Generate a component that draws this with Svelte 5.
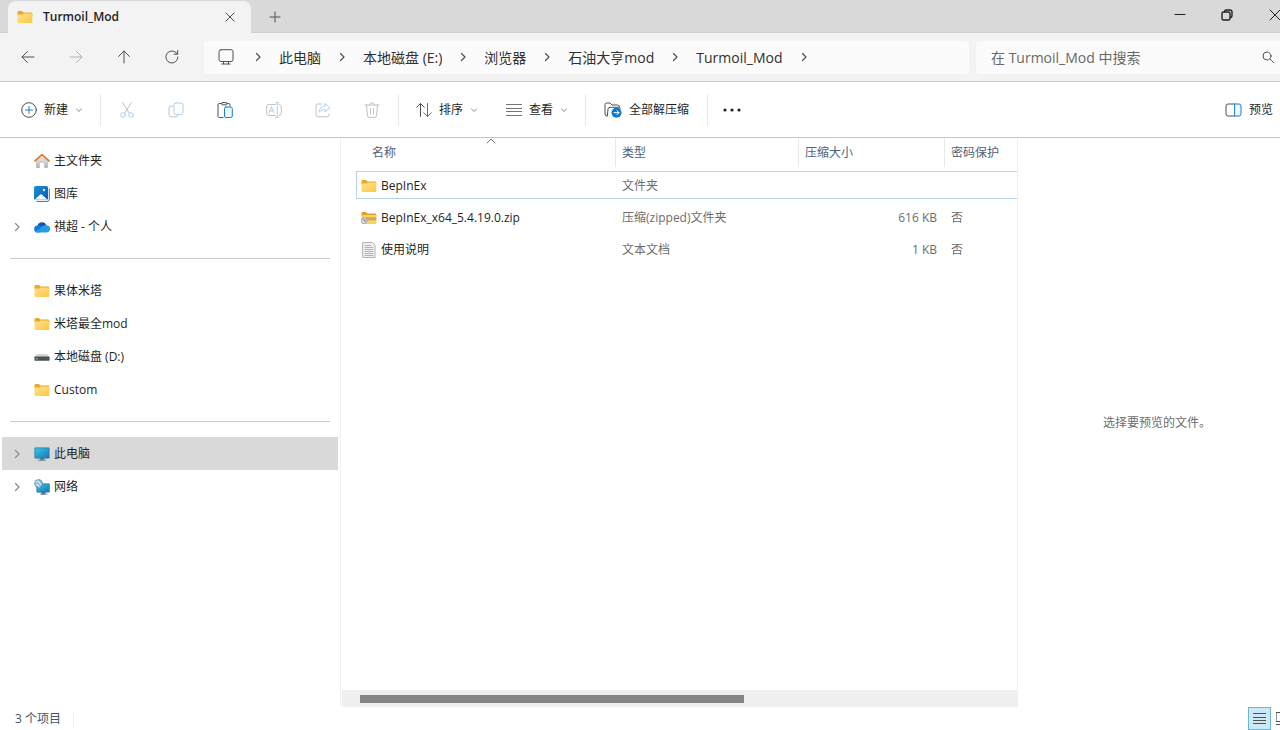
<script>
	const crumbs = ['此电脑', '本地磁盘 (E:)', '浏览器', '石油大亨mod', 'Turmoil_Mod'];

	const groups = [
		[
			{ icon: 'home', label: '主文件夹' },
			{ icon: 'gallery', label: '图库' },
			{ icon: 'cloud', label: '祺超 - 个人', expandable: true }
		],
		[
			{ icon: 'folder', label: '果体米塔' },
			{ icon: 'folder', label: '米塔最全mod' },
			{ icon: 'drive', label: '本地磁盘 (D:)' },
			{ icon: 'folder', label: 'Custom' }
		],
		[
			{ icon: 'pc', label: '此电脑', expandable: true },
			{ icon: 'network', label: '网络', expandable: true }
		]
	];

	const files = [
		{ icon: 'folder', name: 'BepInEx', type: '文件夹', size: '', locked: '' },
		{ icon: 'zip', name: 'BepInEx_x64_5.4.19.0.zip', type: '压缩(zipped)文件夹', size: '616 KB', locked: '否' },
		{ icon: 'text', name: '使用说明', type: '文本文档', size: '1 KB', locked: '否' }
	];

	// visible share of the column area, in percent
	const thumb = 58.4;

	let place = $state('此电脑');
	let selected = $state('BepInEx');
	let query = $state('');
</script>

{#snippet chevron()}
	<svg class="chevron" viewBox="0 0 12 12" width="12" height="12"><path d="M4.5 2.5L8 6 4.5 9.5" /></svg>
{/snippet}

{#snippet caret()}
	<svg class="caret" viewBox="0 0 8 8" width="8" height="8"><path d="M1.5 3L4 5.4 6.5 3" /></svg>
{/snippet}

{#snippet fileIcon(name)}
	<svg class="file-icon" viewBox="0 0 16 16" width="16" height="16" aria-hidden="true">
		{#if name === 'folder'}
			<path d="M.5 3.2q0-1.2 1.2-1.2h3.1l1.8 1.6H14q1.3 0 1.3 1.2V7H.5z" fill="#e9a92b" />
			<path d="M.5 5.4h5.2l1.1-1H15.3v8.4q0 1.2-1.2 1.2H1.7Q.5 14 .5 12.8z" fill="url(#folder-fill)" />
		{:else if name === 'zip'}
			<path d="M.5 3.2q0-1.2 1.2-1.2h3.1l1.8 1.6H14q1.3 0 1.3 1.2V7H.5z" fill="#dda32a" />
			<path d="M.5 5h14.8v7.8q0 1.2-1.2 1.2H1.700Q.5 14 .5 12.8z" fill="#fbd35c" />
			<path d="M5 7.6h10.3v2.600H5z" fill="#a08a4c" />
			<path d="M6 9h9" stroke="#e8d9a8" stroke-dasharray="1 1" />
			<rect x=".4" y="8" width="5.4" height="5.4" rx="2" fill="#e8e8ec" stroke="#9a9aa2" stroke-width=".8" />
			<path d="M2 10h2v2" fill="none" stroke="#77777f" />
		{:else if name === 'text'}
			<path d="M2 .5h9.5L14 3v12.5H2z" fill="#f0f0f0" stroke="#b4b4b4" />
			<path d="M4 3.500h6M4 5.500h8M4 7.500h8M4 9.500h8M4 11.500h8M4 13.500h8" stroke="#b0b4b8" />
		{:else if name === 'home'}
			<path d="M2 7.500L8 2.400l6 5.100V14q0 1-1 1h-2.800v-4q0-1-1-1H6.800q-1 0-1 1v4H3q-1 0-1-1z" fill="url(#house-fill)" />
			<path d="M1 7.900L8 1.700l7 6.200" fill="none" stroke="#dd7d32" stroke-width="1.800" stroke-linecap="round" stroke-linejoin="round" />
		{:else if name === 'gallery'}
			<path d="M15.300 3v10.200q0 2.200-2.200 2.200H3" fill="none" stroke="#2c6fb5" />
			<rect width="14" height="14" rx="1.800" fill="url(#sky-fill)" />
			<path d="M1 13.200l5.200-4.600q.8-.7 1.600 0l5.200 4.600q-.4.6-1.200.6H2.200q-.8 0-1.200-.6z" fill="#f4faff" />
			<circle cx="10" cy="4" r="1.200" fill="#d9efff" />
		{:else if name === 'cloud'}
			<path d="M3.400 7.400A4.700 4.700 0 0 1 12.400 6.200L9 10.500z" fill="#0d57b4" />
			<path d="M3.900 13.600A3.600 3.600 0 0 1 3.600 6.400q2-.4 3.600.6l5.600 5z" fill="#1279d3" />
			<path d="M6 10q2.400-4.200 6.400-3.700a3.600 3.600 0 0 1 .1 7.300H3.900q-2 0-3-1.600z" fill="#279ce6" />
		{:else if name === 'drive'}
			<path d="M3 5h10l2.600 3H.4z" fill="#d2d4d5" />
			<rect x=".4" y="7.600" width="15.200" height="4.200" rx=".8" fill="#4d5253" />
			<path d="M2 9.800h1.500" stroke="#7bd0b3" />
		{:else if name === 'pc'}
			<path d="M6 12h4v2H6z" fill="#6b8596" />
			<path d="M4.500 14.200h7" stroke="#60788a" />
			<rect x=".5" y="1.500" width="15" height="11" rx=".8" fill="#1e6d9c" />
			<rect x="1.200" y="2.200" width="13.600" height="9.600" fill="url(#screen-fill)" />
		{:else}
			<path d="M8 13h3v2H8zM6.500 15.200H13" fill="#60788a" stroke="#60788a" stroke-width=".8" />
			<rect x="2.500" y="4.500" width="13.200" height="9" rx=".8" fill="#1e6d9c" />
			<rect x="3.200" y="5.200" width="11.800" height="7.600" fill="url(#screen-fill)" />
			<circle cx="4.600" cy="4.600" r="4" fill="#8bbdd6" stroke="#4a86a8" stroke-width=".7" />
			<path d="M2 3q2-2 3 0t2 2.500M2 6q2-1 3 2" fill="none" stroke="#dceff7" stroke-width="1.200" />
		{/if}
	</svg>
{/snippet}

<svg class="defs" width="0" height="0" aria-hidden="true">
	<defs>
		<linearGradient id="folder-fill" x1="0" y1="0" x2="1" y2="1"><stop stop-color="#ffe292" /><stop offset="1" stop-color="#fbc740" /></linearGradient>
		<linearGradient id="house-fill" x1="0" y1="0" x2="0" y2="1"><stop stop-color="#eeeeef" /><stop offset="1" stop-color="#b4b4b8" /></linearGradient>
		<linearGradient id="sky-fill" x1="0" y1="0" x2="1" y2="1"><stop stop-color="#1b8fdc" /><stop offset="1" stop-color="#0a5cab" /></linearGradient>
		<linearGradient id="screen-fill" x1="0" y1="0" x2="1" y2="1"><stop stop-color="#3bc5dd" /><stop offset="1" stop-color="#1579bd" /></linearGradient>
	</defs>
</svg>

<div class="window">
	<header class="titlebar">
		<div class="tab">
			{@render fileIcon('folder')}
			<span class="title">Turmoil_Mod</span>
			<button type="button" aria-label="关闭标签页">
				<svg viewBox="0 0 10 10" width="10" height="10"><path d="M.8.8l8.400 8.400M9.200.8L.8 9.200" /></svg>
			</button>
		</div>
		<button class="add" type="button" aria-label="新标签页">
			<svg viewBox="0 0 12 12" width="12" height="12"><path d="M6 1v10M1 6h10" /></svg>
		</button>
		<div class="controls">
			<button type="button" aria-label="最小化">
				<svg viewBox="0 0 12 12" width="12" height="12"><path d="M1 5.500h10" /></svg>
			</button>
			<button type="button" aria-label="还原">
				<svg class="restore" viewBox="0 0 12 12" width="12" height="12"><rect x="1" y="3" width="8" height="8" rx="1.500" /><path d="M3.500 2.500Q3.800 1 5.300 1H9q2 0 2 2v3.700q0 1.500-1.500 1.800" /></svg>
			</button>
			<button type="button" aria-label="关闭">
				<svg viewBox="0 0 12 12" width="12" height="12"><path d="M1 1l10 10M11 1L1 11" /></svg>
			</button>
		</div>
	</header>

	<div class="navbar">
		<nav class="history">
			<button type="button" aria-label="后退">
				<svg viewBox="0 0 16 16" width="16" height="16"><path d="M14 8H2M7.500 2.500L2 8l5.500 5.500" /></svg>
			</button>
			<button type="button" aria-label="前进" disabled>
				<svg viewBox="0 0 16 16" width="16" height="16"><path d="M2 8h12M8.500 2.500L14 8l-5.500 5.500" /></svg>
			</button>
			<button type="button" aria-label="向上">
				<svg viewBox="0 0 16 16" width="16" height="16"><path d="M8 14V2M2.500 7.500L8 2l5.500 5.500" /></svg>
			</button>
			<button type="button" aria-label="刷新">
				<svg viewBox="0 0 16 16" width="16" height="16"><path d="M13.900 8A6 6 0 1 1 12 3.600L13.500 5M13.700 1.500V5.200H10" /></svg>
			</button>
		</nav>
		<div class="address">
			<svg class="monitor" viewBox="0 0 16 16" width="16" height="16"><rect x="1" y=".7" width="14" height="11.800" rx="2" /><path d="M5.500 12.500v2.300M10.500 12.500v2.300M3.800 15h8.400" /></svg>
			{@render chevron()}
			{#each crumbs as crumb}
				<button type="button">{crumb}</button>
				{@render chevron()}
			{/each}
		</div>
		<label class="search">
			<input type="text" placeholder="在 Turmoil_Mod 中搜索" aria-label="搜索" bind:value={query} />
			<svg viewBox="0 0 12 12" width="12" height="12"><circle cx="5" cy="5" r="4" /><path d="M8 8l3.500 3.500" /></svg>
		</label>
	</div>

	<div class="toolbar">
		<button class="new" type="button">
			<svg viewBox="0 0 16 16" width="16" height="16"><circle cx="8" cy="8" r="7.300" /><path class="blue" d="M8 4.500v7M4.500 8h7" /></svg>
			新建
			{@render caret()}
		</button>
		<div class="actions">
			<button type="button" aria-label="剪切" disabled>
				<svg viewBox="0 0 16 16" width="16" height="16"><path d="M3.500.5l6.800 10.700M12.500.5L5.700 11.200" /><circle class="blue" cx="4" cy="13" r="2.300" /><circle class="blue" cx="12" cy="13" r="2.300" /></svg>
			</button>
			<button type="button" aria-label="复制" disabled>
				<svg viewBox="0 0 16 16" width="16" height="16"><path d="M5 4H3Q1 4 1 6v6.500q0 2.300 2.300 2.300H8q1.600 0 2.200-1.800" /><rect class="blue" x="6" y="1" width="9" height="11.500" rx="2" /></svg>
			</button>
			<button type="button" aria-label="粘贴">
				<svg viewBox="0 0 16 16" width="16" height="16"><path d="M4.500 1.500H2.300Q1 1.500 1 2.800v11.400q0 1.300 1.300 1.300H6M10 1.500h1.700q1.300 0 1.300 1.300V4" /><rect x="4.500" y=".6" width="5.500" height="2.200" rx="1" /><rect class="blue tint" x="7.500" y="5" width="7.800" height="10.500" rx="1.500" /></svg>
			</button>
			<button type="button" aria-label="重命名" disabled>
				<svg viewBox="0 0 16 16" width="16" height="16"><path d="M9.500 2.500H2.800Q.7 2.500.7 4.600v6.800q0 2.100 2.100 2.100h6.700M13 2.500q2.300.2 2.300 2.100v6.800q0 1.900-2.300 2.100" /><path class="blue" d="M3 11l2.500-6.500L8 11M3.800 9h3.400M11.300.7v14.600M9.600.7H13M9.600 15.300H13" /></svg>
			</button>
			<button type="button" aria-label="共享" disabled>
				<svg viewBox="0 0 16 16" width="16" height="16"><path d="M6.500 2H3Q1 2 1 4v8.500q0 2.300 2.300 2.300h8.400q2.300 0 2.300-2.300V12" /><path class="blue" d="M10 1.500l5 4.300-5 4.200V7.600q-3.800-.2-6 2.700.6-5.700 6-6.300z" /></svg>
			</button>
			<button type="button" aria-label="删除" disabled>
				<svg viewBox="0 0 16 16" width="16" height="16"><path d="M1 3h14M5.600 3q0-2.200 2.400-2.200T10.400 3M2.500 3l1 10.700q.2 1.700 1.800 1.700h5.400q1.600 0 1.800-1.700l1-10.700M6.500 6.500V12M9.500 6.500V12" /></svg>
			</button>
		</div>
		<div class="menus">
			<button type="button">
				<svg viewBox="0 0 16 16" width="16" height="16"><path d="M4.500 14.500v-13M.7 5.300l3.800-3.800 3.800 3.800" /><path class="blue" d="M11.500 1.500v13M7.700 10.700l3.800 3.800 3.800-3.800" /></svg>
				排序
				{@render caret()}
			</button>
			<button type="button">
				<svg class="lines" viewBox="0 0 16 16" width="16" height="16"><path d="M0 2.500h16M0 6.500h16M0 9.500h16M0 13.500h16" /></svg>
				查看
				{@render caret()}
			</button>
		</div>
		<button class="extract" type="button">
			<svg viewBox="0 0 18 16" width="18" height="16"><path d="M3 14q-2 0-2-2V2.700Q1 1 2.600 1H6l2 2h5.500q2 0 2 2.200M3.300 14l.7-7q.2-1.700 2-1.700h8.700q1.600 0 1.500 1.700" /><circle class="badge" cx="12.500" cy="10.700" r="5" /><path class="white" d="M10 10.700h5M13 8.700l2 2-2 2" /></svg>
			全部解压缩
		</button>
		<button class="more" type="button" aria-label="更多">
			<svg viewBox="0 0 18 4" width="18" height="4"><circle cx="2" cy="2" r="1.600" /><circle cx="9" cy="2" r="1.600" /><circle cx="16" cy="2" r="1.600" /></svg>
		</button>
		<button class="preview-toggle" type="button">
			<svg viewBox="0 0 17 14" width="17" height="14"><path d="M10 1H3Q1 1 1 3v8q0 2 2 2h7" /><path class="blue tint" d="M10 1h4q2 0 2 2v8q0 2-2 2h-4z" /></svg>
			预览
		</button>
	</div>

	<main>
		<nav class="sidebar">
			{#each groups as group, i}
				{#if i > 0}<hr />{/if}
				{#each group as item}
					<button
						type="button"
						class:current={place === item.label}
						onclick={() => (place = item.label)}
					>
						<span class="expander">
							{#if item.expandable}{@render chevron()}{/if}
						</span>
						{@render fileIcon(item.icon)}
						{item.label}
					</button>
				{/each}
			{/each}
		</nav>

		<section class="files">
			<table>
				<colgroup>
					<col class="col-name" />
					<col class="col-type" />
					<col class="col-size" />
					<col />
				</colgroup>
				<thead>
					<tr>
						<th class="sorted">
							名称
							<svg viewBox="0 0 10 6" width="10" height="6"><path d="M1 5l4-4 4 4" /></svg>
						</th>
						<th>类型</th>
						<th>压缩大小</th>
						<th>密码保护</th>
					</tr>
				</thead>
				<tbody>
					{#each files as file}
						<tr class:selected={selected === file.name} onclick={() => (selected = file.name)}>
							<td><span class="name">{@render fileIcon(file.icon)}{file.name}</span></td>
							<td>{file.type}</td>
							<td class="size">{file.size}</td>
							<td>{file.locked}</td>
						</tr>
					{/each}
				</tbody>
			</table>
			<div class="scrollbar">
				<div class="thumb" style="width: {thumb}%"></div>
			</div>
		</section>

		<aside class="preview">选择要预览的文件。</aside>
	</main>

	<footer>
		<span class="count">3 个项目</span>
		<div class="views">
			<button class="on" type="button" aria-label="详细信息">
				<svg viewBox="0 0 13 13" width="13" height="13"><path d="M0 1.500h13M0 5.500h13M0 8.500h13M0 11.500h13" /></svg>
			</button>
			<button type="button" aria-label="大图标">
				<svg viewBox="0 0 13 13" width="13" height="13"><path d="M.5.5h12v9H.5zM0 12.500h13" /></svg>
			</button>
		</div>
	</footer>
</div>

<style>
	:global(body) {
		margin: 0;
		background: #fff;
	}
	.defs {
		position: absolute;
	}
	.window {
		height: 100vh;
		display: flex;
		flex-direction: column;
		overflow: hidden;
		background: #fff;
		color: #1f1f1f;
		font-family: 'Open Sans', 'Noto Sans', 'Noto Sans CJK SC', sans-serif;
		font-size: 12px;
		line-height: 16px;
	}
	button {
		display: flex;
		align-items: center;
		padding: 0;
		border: 0;
		background: none;
		color: inherit;
		font: inherit;
		white-space: nowrap;
	}
	svg {
		display: block;
		flex: none;
		fill: none;
		stroke: #505050;
		stroke-width: 1;
		stroke-linecap: round;
		stroke-linejoin: round;
	}
	.file-icon {
		stroke: none;
	}
	.blue {
		stroke: #1b7fd0;
	}
	.tint {
		fill: #eef7fe;
	}
	.white {
		stroke: #fff;
	}
	.badge {
		fill: #0b78d0;
		stroke: none;
	}
	.chevron {
		stroke-width: 1.2;
	}
	.caret {
		stroke: #8a8a8a;
	}
	.lines {
		stroke: #757575;
		stroke-linecap: butt;
	}

	.titlebar {
		display: flex;
		flex: none;
		height: 33px;
		background: #d9d9d9;
		box-shadow: inset 0 -1px #cfcfcf;
	}
	.tab {
		display: flex;
		align-items: center;
		box-sizing: border-box;
		width: 243px;
		margin: 1px 0 0 8px;
		padding: 0 16px 0 9px;
		gap: 10px;
		border-radius: 8px 8px 0 0;
		background: #f3f3f3;
	}
	.title {
		flex: 1;
		font-weight: 600;
	}
	.add {
		margin-left: 18px;
	}
	.controls {
		display: flex;
		align-items: center;
		gap: 35px;
		height: 30px;
		margin: 0 -1px 0 auto;
	}
	.controls svg {
		stroke: #222;
	}
	.controls .restore {
		margin: 0 1px 0 0;
		stroke-width: 1.4;
	}

	.navbar {
		display: flex;
		flex: none;
		align-items: center;
		box-sizing: border-box;
		height: 49px;
		padding-left: 12px;
		background: #f3f3f3;
		border-bottom: 1px solid #cbcbcb;
		color: #303030;
		font-size: 14px;
		line-height: 20px;
	}
	.history {
		display: flex;
		gap: 16px;
		margin-right: 16px;
	}
	.history button {
		justify-content: center;
		width: 32px;
		height: 32px;
	}
	.history button:disabled {
		opacity: 0.4;
	}
	.address {
		display: flex;
		flex: 1;
		align-items: center;
		gap: 15px;
		height: 33px;
		padding-left: 14px;
		border-radius: 4px;
		background: #fbfbfb;
	}
	.address button {
		padding-top: 1px;
	}
	.monitor {
		margin-right: 3px;
	}
	.search {
		display: flex;
		align-items: center;
		box-sizing: border-box;
		width: 304px;
		height: 33px;
		margin-left: 7px;
		padding: 0 6px 0 15px;
		border-radius: 4px 0 0 4px;
		background: #fbfbfb;
	}
	.search input {
		flex: 1;
		min-width: 0;
		padding: 1px 0 0;
		border: 0;
		outline: 0;
		background: none;
		font: inherit;
	}
	.search input::placeholder {
		color: #686868;
		opacity: 1;
	}

	.toolbar {
		display: flex;
		flex: none;
		align-items: center;
		box-sizing: border-box;
		height: 56px;
		padding: 0 7px 0 21px;
		border-bottom: 1px solid #c6c6c6;
	}
	.toolbar button {
		gap: 7px;
		height: 32px;
	}
	.new,
	.actions,
	.menus,
	.extract {
		border-right: 1px solid #e8e8e8;
	}
	.toolbar .new {
		padding-right: 17px;
	}
	.actions {
		display: flex;
		gap: 33px;
		padding: 0 18px;
	}
	.actions button:disabled {
		opacity: 0.35;
	}
	.menus {
		display: flex;
		gap: 28px;
		padding: 0 17px;
	}
	.toolbar .extract {
		padding: 0 18px;
	}
	.more {
		margin-left: 15px;
	}
	.more svg {
		fill: #222;
		stroke: none;
	}
	.preview-toggle {
		margin-left: auto;
	}

	main {
		display: flex;
		flex: 1;
		min-height: 0;
	}
	.sidebar {
		box-sizing: border-box;
		width: 341px;
		padding: 6px 2px 0;
		border-right: 1px solid #f0f0f0;
	}
	.sidebar button {
		gap: 4px;
		width: 100%;
		height: 33px;
	}
	.sidebar .current {
		background: #d9d9d9;
	}
	.expander {
		width: 28px;
		padding-left: 9px;
		box-sizing: border-box;
	}
	.expander .chevron {
		stroke: #8a8a8a;
	}
	hr {
		height: 1px;
		margin: 15px 8px;
		border: 0;
		background: #c8c8c8;
	}

	.files {
		display: flex;
		flex: 1;
		flex-direction: column;
		min-width: 0;
		border-right: 1px solid #f0f0f0;
	}
	/* the row spacing above the header is pulled back out */
	table {
		width: calc(100% - 15px);
		margin: -4px 0 0 15px;
		table-layout: fixed;
		border-spacing: 0 4px;
	}
	.col-name {
		width: 260px;
	}
	.col-type {
		width: 183px;
	}
	.col-size {
		width: 146px;
	}
	th,
	td {
		box-sizing: border-box;
		height: 28px;
		padding: 2px 8px 0 6px;
		border: 0 solid transparent;
		border-width: 1px 0;
		text-align: left;
		white-space: nowrap;
	}
	th {
		height: 29px;
		padding: 0 0 0 6px;
		border-width: 0 1px 0 0;
		border-color: #e8e8e8;
		color: #50617a;
		font-weight: 400;
	}
	th:last-child {
		border-right: 0;
	}
	.sorted {
		position: relative;
		padding-left: 16px;
	}
	.sorted svg {
		position: absolute;
		top: 0;
		left: 50%;
		stroke: #777;
	}
	td {
		color: #6d6d6d;
	}
	td:first-child {
		padding: 2px 0 0 4px;
		border-left-width: 1px;
		color: #1f1f1f;
	}
	.selected td {
		border-color: #b5d3ea;
	}
	.name {
		display: flex;
		align-items: center;
		gap: 4px;
	}
	.size {
		text-align: right;
	}
	.scrollbar {
		display: flex;
		align-items: center;
		height: 17px;
		margin: auto 0 0 1px;
		padding-left: 18px;
		background: #efefef;
	}
	.thumb {
		height: 8px;
		background: #858585;
	}

	.preview {
		display: grid;
		place-items: center;
		box-sizing: border-box;
		width: 262px;
		padding-left: 16px;
		color: #6d6d6d;
	}

	footer {
		display: flex;
		flex: none;
		align-items: center;
		justify-content: space-between;
		height: 23px;
		padding-left: 15px;
	}
	.count {
		padding-right: 12px;
		border-right: 1px solid #ececec;
		color: #44546f;
	}
	.views {
		display: flex;
		margin-right: -14px;
	}
	.views button {
		justify-content: center;
		box-sizing: border-box;
		width: 23px;
		height: 23px;
	}
	.views .on {
		border: 1px solid #6fb4d3;
		background: #cbe9f7;
	}
</style>
